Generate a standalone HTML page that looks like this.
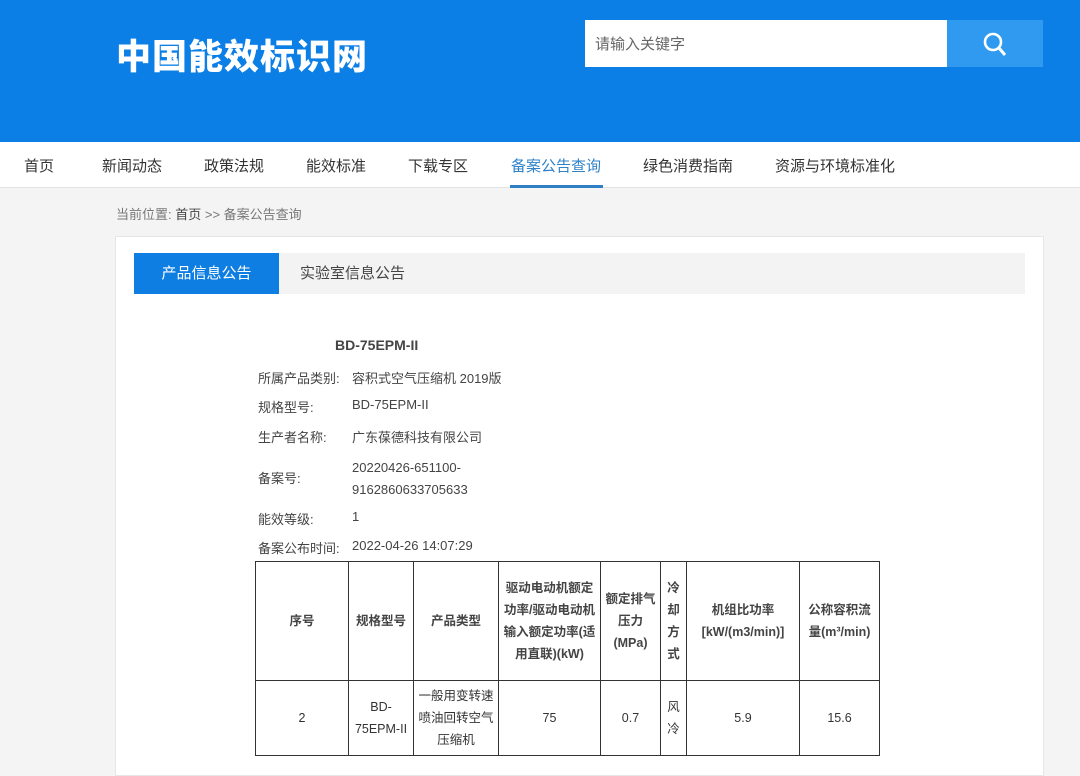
<!DOCTYPE html>
<html><head><meta charset="utf-8"><style>
*{margin:0;padding:0;box-sizing:border-box}
body{width:1080px;height:759px;overflow:hidden;background:#f4f4f4;font-family:"Liberation Sans","Noto Sans CJK SC",sans-serif;color:#333;position:relative}
.hd{position:absolute;left:0;top:0;width:1080px;height:142px;background:#0b7fe6}
.logo{position:absolute;left:116px;top:29px;font-size:35px;font-weight:900;color:#fff;letter-spacing:1px}
.search{position:absolute;left:585px;top:20px;width:362px;height:47px;background:#fff;font-size:15px;color:#666;padding:13px 10px}
.sbtn{position:absolute;left:947px;top:20px;width:96px;height:47px;background:#2f9af0}
.nav{position:absolute;left:0;top:142px;width:1080px;height:46px;background:#fff;border-bottom:1px solid #e3e3e3}
.nav span{position:absolute;top:13px;font-size:15px;color:#333}
.nav .on{color:#2f82c8}
.nav .bar{position:absolute;left:510px;top:43px;width:93px;height:3px;background:#2f7fc4}
.crumb{position:absolute;left:116px;top:204px;font-size:13px;color:#777}
.crumb b{font-weight:normal;color:#444}
.card{position:absolute;left:115px;top:236px;width:929px;height:540px;background:#fff;border:1px solid #e6e6e6}
.tabs{position:absolute;left:134px;top:253px;width:891px;height:41px;background:#f3f3f3}
.tab1{position:absolute;left:134px;top:253px;width:145px;height:41px;background:#0e7ee2;color:#fff;font-size:15px;text-align:center;line-height:41px}
.tab2{position:absolute;left:300px;top:253px;font-size:15px;color:#444;line-height:41px}
.ttl{position:absolute;left:335px;top:337px;font-size:14px;font-weight:bold;color:#444}
.row{position:absolute;font-size:13px;color:#444}
.lb{left:258px}.vl{left:352px}
table{position:absolute;left:255px;top:561px;width:624px;border-collapse:collapse;table-layout:fixed;font-size:12.5px;color:#333}
td{border:1px solid #333;text-align:center;line-height:22px;padding:0 5px}
tr.h td{font-weight:bold;color:#444}
</style></head><body>
<div class="hd">
<div class="logo">中国能效标识网</div>
<div class="search">请输入关键字</div>
<div class="sbtn"><svg width="96" height="47"><circle cx="46" cy="22" r="8" fill="none" stroke="#fff" stroke-width="2.6"/><line x1="52" y1="28" x2="58" y2="35" stroke="#fff" stroke-width="3"/></svg></div>
</div>
<div class="nav">
<span style="left:24px">首页</span><span style="left:102px">新闻动态</span><span style="left:204px">政策法规</span><span style="left:306px">能效标准</span><span style="left:408px">下载专区</span><span class="on" style="left:511px">备案公告查询</span><span style="left:643px">绿色消费指南</span><span style="left:775px">资源与环境标准化</span>
<div class="bar"></div></div>
<div class="crumb">当前位置: <b>首页</b> &gt;&gt; 备案公告查询</div>
<div class="card"></div>
<div class="tabs"></div>
<div class="tab1">产品信息公告</div>
<div class="tab2">实验室信息公告</div>
<div class="ttl">BD-75EPM-II</div>
<div class="row lb" style="top:368px">所属产品类别:</div><div class="row vl" style="top:368px">容积式空气压缩机 2019版</div>
<div class="row lb" style="top:397px">规格型号:</div><div class="row vl" style="top:397px">BD-75EPM-II</div>
<div class="row lb" style="top:427px">生产者名称:</div><div class="row vl" style="top:427px">广东葆德科技有限公司</div>
<div class="row lb" style="top:468px">备案号:</div><div class="row vl" style="top:457px;line-height:22px">20220426-651100-<br>9162860633705633</div>
<div class="row lb" style="top:509px">能效等级:</div><div class="row vl" style="top:509px">1</div>
<div class="row lb" style="top:538px">备案公布时间:</div><div class="row vl" style="top:538px">2022-04-26 14:07:29</div>
<table>
<colgroup><col style="width:93px"><col style="width:65px"><col style="width:85px"><col style="width:102px"><col style="width:60px"><col style="width:26px"><col style="width:113px"><col style="width:80px"></colgroup>
<tr class="h" style="height:119px"><td>序号</td><td>规格型号</td><td>产品类型</td><td style="padding:0 4px">驱动电动机额定功率/驱动电动机输入额定功率(适用直联)(kW)</td><td style="padding:0 4px">额定排气压力(MPa)</td><td style="padding:0 6px">冷却方式</td><td>机组比功率[kW/(m3/min)]</td><td style="padding:0 3px">公称容积流量(m³/min)</td></tr>
<tr style="height:75px"><td>2</td><td style="padding:0 3px">BD-<br>75EPM-II</td><td style="padding:0 4px">一般用变转速喷油回转空气压缩机</td><td>75</td><td>0.7</td><td style="padding:0 6px">风冷</td><td>5.9</td><td>15.6</td></tr>
</table>
</body></html>
